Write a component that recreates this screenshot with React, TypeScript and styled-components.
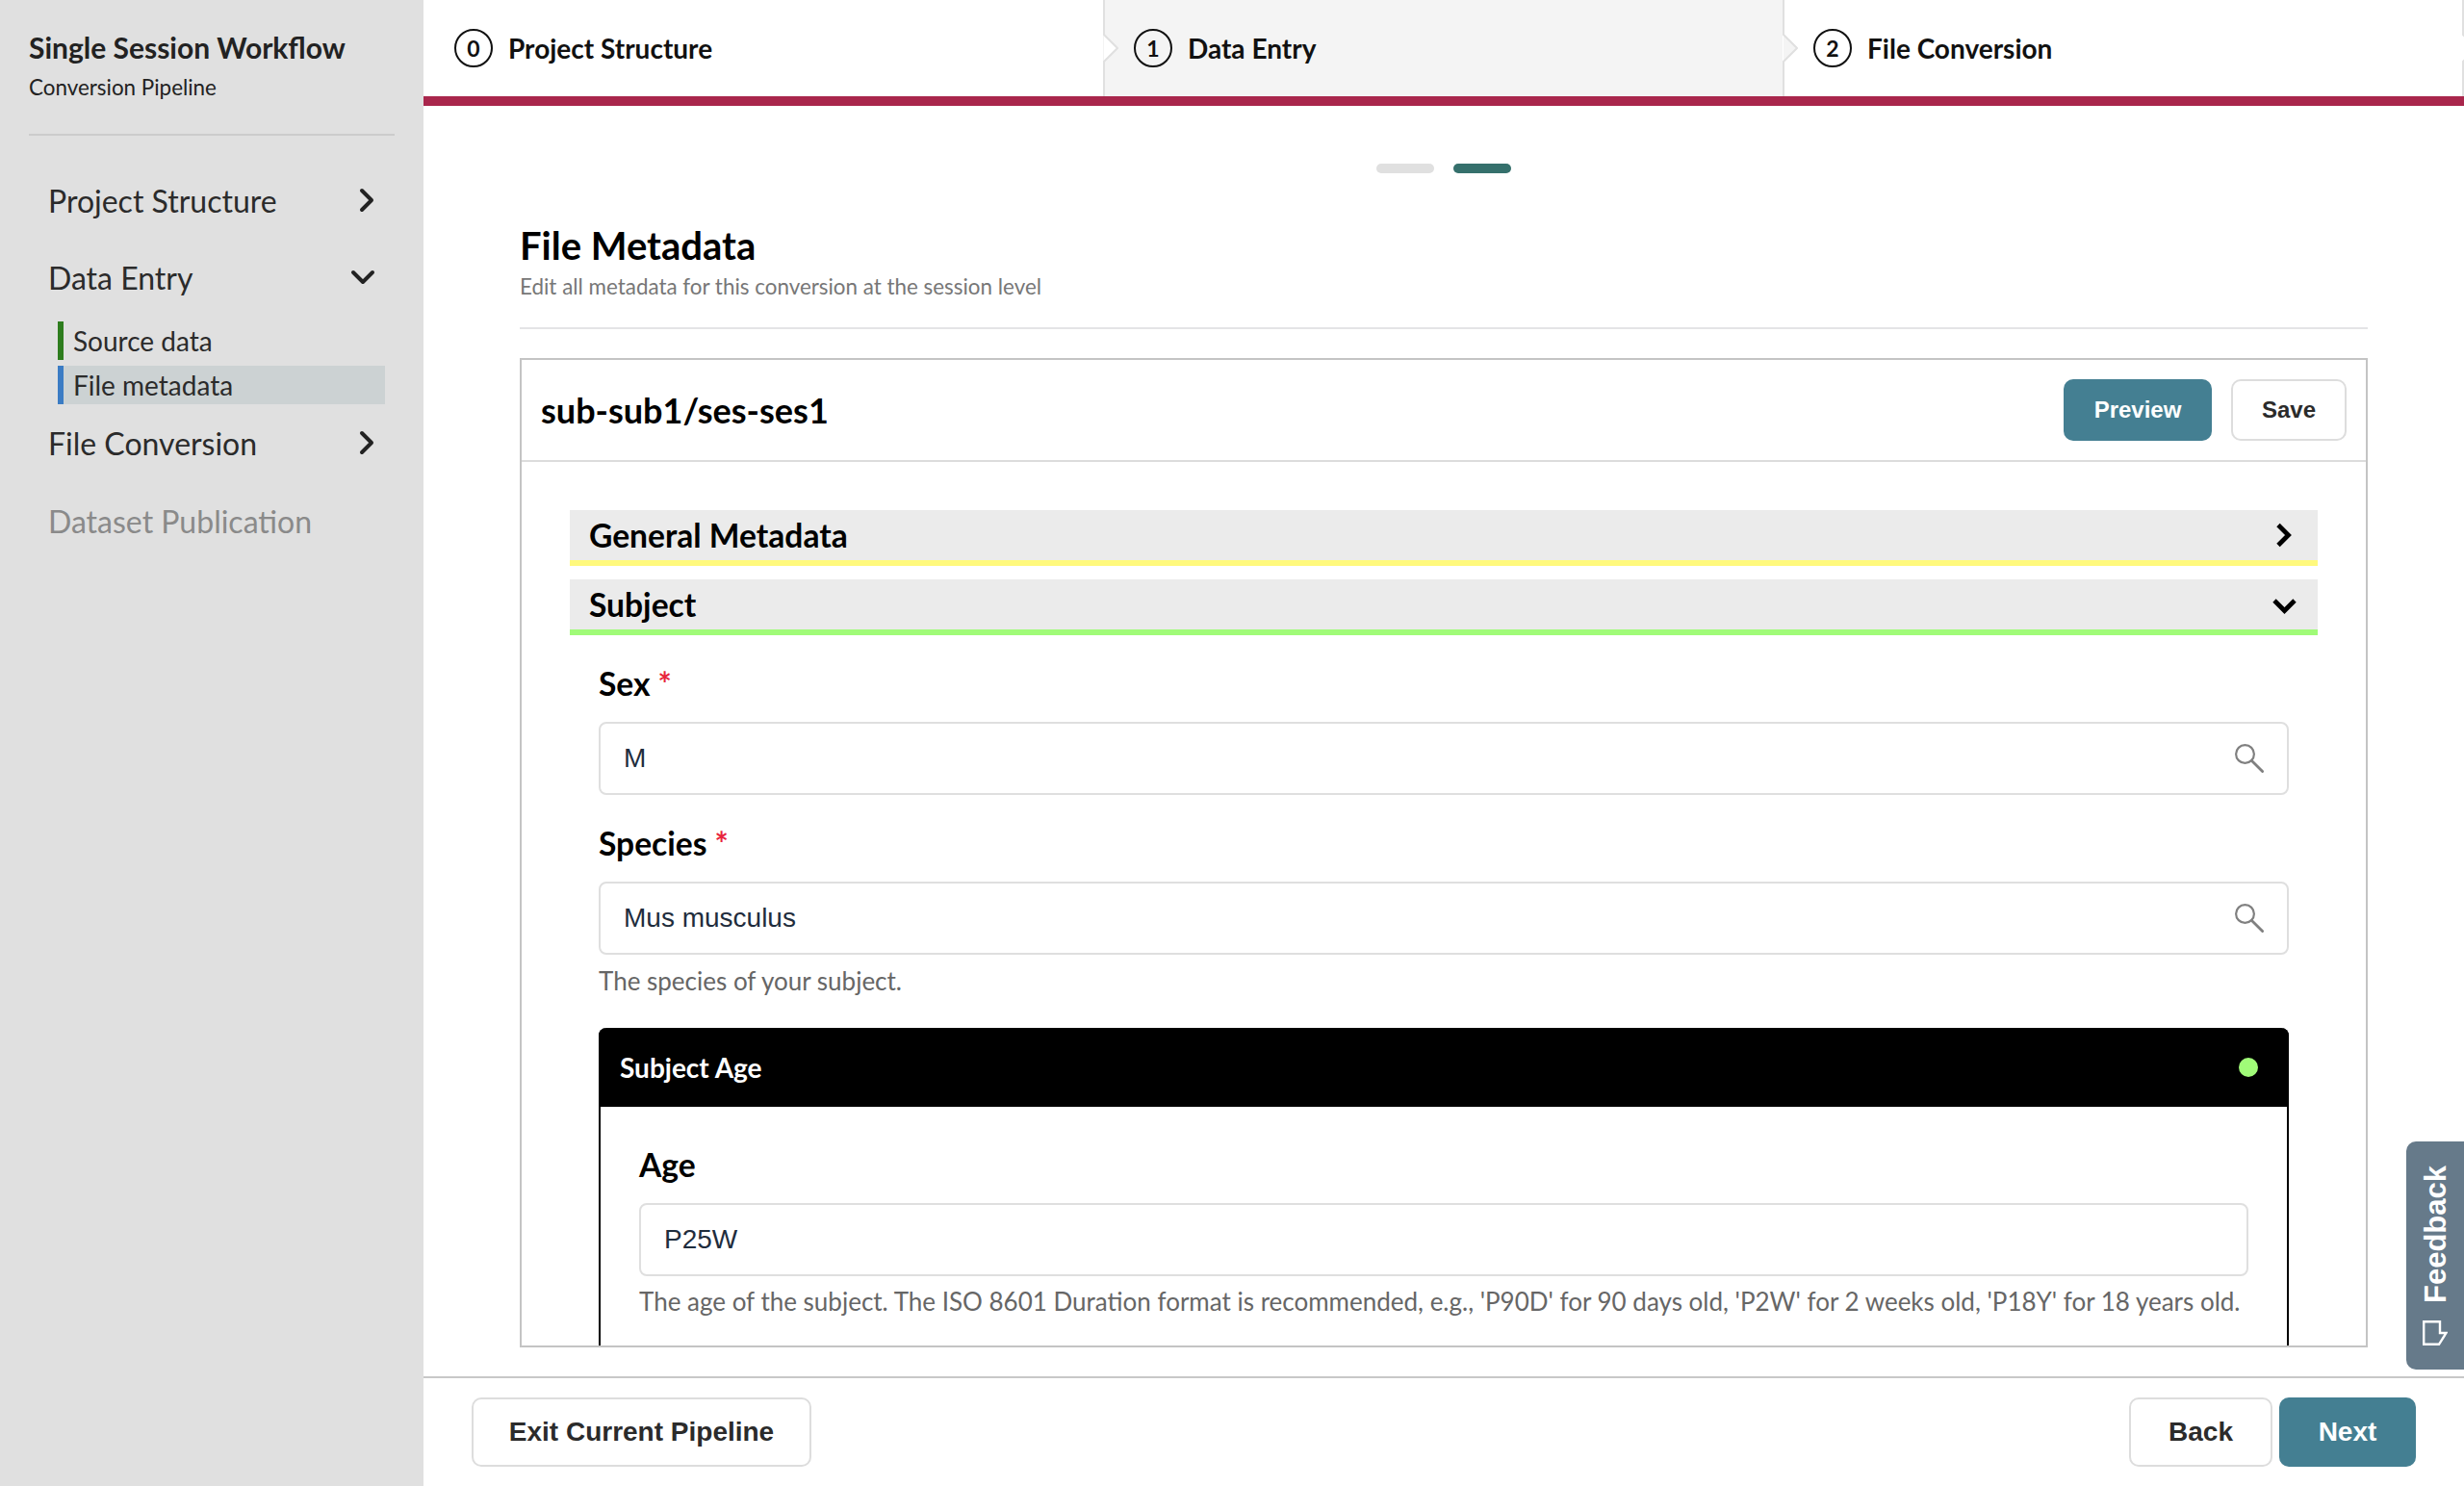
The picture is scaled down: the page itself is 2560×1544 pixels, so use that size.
import React from "react";
import styled, { createGlobalStyle } from "styled-components";

const Global = createGlobalStyle`
  html, body { margin: 0; padding: 0; height: 100%; background: #fff; overflow: hidden; }
  #root { height: 100%; }
  * { box-sizing: border-box; }
`;

const lato = `Lato, "Noto Sans", sans-serif`;
const helv = `"Liberation Sans", Arial, sans-serif`;

const Shell = styled.div`
  display: flex;
  width: 2560px;
  height: 1544px;
  font-family: ${lato};
  position: relative;
  overflow: hidden;
`;

const Sidebar = styled.aside`
  width: 440px;
  flex: none;
  background: #e0e0e0;
  padding: 29px 30px 0;
`;
const SideTitle = styled.div`
  font-size: 30px;
  font-weight: 700;
  line-height: 40px;
  color: #222;
`;
const SideSub = styled.div`
  font-size: 22.4px;
  line-height: 30px;
  margin-top: 7px;
  color: #222;
`;
const SideRule = styled.div`
  height: 2px;
  background: #ccc;
  margin: 33px 0 47px;
`;
const NavRow = styled.div<{ $muted?: boolean; $top?: number; $gapAfter: number }>`
  display: flex;
  align-items: center;
  justify-content: space-between;
  height: 40px;
  padding: 0 20px 0 20px;
  margin-top: ${(p) => p.$top ?? 0}px;
  margin-bottom: ${(p) => p.$gapAfter}px;
  font-size: 32px;
  color: ${(p) => (p.$muted ? "#8a8a8a" : "#2b2b2b")};
`;
const SubItem = styled.div<{ $bar: string; $active?: boolean }>`
  display: flex;
  align-items: center;
  height: 40px;
  width: 340px;
  margin: 0 0 6px 30px;
  padding-left: 10px;
  border-left: 6px solid ${(p) => p.$bar};
  background: ${(p) => (p.$active ? "#ccd2d3" : "transparent")};
  font-size: 28px;
  color: #2b2b2b;
`;

const Main = styled.main`
  flex: 1;
  min-width: 0;
  display: flex;
  flex-direction: column;
`;
const Stepper = styled.nav`
  display: flex;
  height: 110px;
  flex: none;
  border-bottom: 10px solid #a9264c;
`;
const Step = styled.div<{ $bg?: boolean; $w: number }>`
  position: relative;
  width: ${(p) => p.$w}px;
  display: flex;
  align-items: center;
  gap: 16px;
  padding: 0 0 0 32px;
  background: ${(p) => (p.$bg ? "#f4f4f4" : "#fff")};
  font-size: 28px;
  font-weight: 700;
  color: #111;
`;
const StepNum = styled.span`
  width: 40px;
  height: 40px;
  border-radius: 50%;
  border: 2px solid #111;
  display: flex;
  align-items: center;
  justify-content: center;
  font-size: 23px;
  font-weight: 700;
  font-variant-numeric: lining-nums;
  font-family: ${lato};
`;
const StepArrow = styled.svg`
  position: absolute;
  right: -16px;
  top: 0;
  width: 16px;
  height: 100px;
  z-index: 1;
`;

const Content = styled.div`
  flex: 1;
  min-height: 0;
  display: flex;
  flex-direction: column;
  padding: 60px 100px 30px 100px;
`;
const Pills = styled.div`
  display: flex;
  justify-content: center;
  gap: 20px;
  margin-bottom: 50px;
`;
const Pill = styled.span<{ $on?: boolean }>`
  width: 60px;
  height: 10px;
  border-radius: 5px;
  background: ${(p) => (p.$on ? "#35706c" : "#e0e0e0")};
`;
const PageTitle = styled.h1`
  margin: 0;
  font-size: 40px;
  font-weight: 700;
  line-height: 50px;
  color: #000;
`;
const PageSub = styled.div`
  font-size: 22.4px;
  line-height: 28px;
  margin-top: 4px;
  color: #777;
`;
const Rule = styled.div`
  height: 2px;
  background: #e4e4e6;
  margin: 28px 0 30px;
`;
const Card = styled.section`
  flex: 1;
  min-height: 0;
  border: 2px solid #c4c4c4;
  display: flex;
  flex-direction: column;
  overflow: hidden;
`;
const CardHead = styled.header`
  height: 106px;
  flex: none;
  border-bottom: 2px solid #dcdcdc;
  display: flex;
  align-items: center;
  justify-content: space-between;
  padding: 0 20px;
`;
const CardTitle = styled.div`
  font-size: 36px;
  font-weight: 700;
  color: #000;
`;
const BtnRow = styled.div<{ $gap: number }>`
  display: flex;
  gap: ${(p) => p.$gap}px;
`;
const Btn = styled.button<{ $primary?: boolean; $w: number; $h: number; $fs: number }>`
  width: ${(p) => p.$w}px;
  height: ${(p) => p.$h}px;
  border-radius: 10px;
  border: ${(p) => (p.$primary ? "none" : "2px solid #ddd")};
  background: ${(p) => (p.$primary ? "#447f92" : "#fff")};
  color: ${(p) => (p.$primary ? "#fff" : "#2b2b2b")};
  font-family: ${helv};
  font-weight: 700;
  font-size: ${(p) => p.$fs}px;
  padding: 0;
`;
const CardBody = styled.div`
  padding: 50px 50px 0;
  display: flex;
  flex-direction: column;
`;
const AccHead = styled.div<{ $color: string; $gapAfter: number }>`
  height: 58px;
  flex: none;
  background: #ebebeb;
  border-bottom: 6px solid ${(p) => p.$color};
  margin-bottom: ${(p) => p.$gapAfter}px;
  display: flex;
  align-items: center;
  justify-content: space-between;
  padding: 0 22px 0 20px;
  font-size: 33.6px;
  font-weight: 700;
  color: #000;
`;
const AccBody = styled.div`
  padding: 30px 30px 0;
`;
const Label = styled.div`
  font-size: 33.6px;
  font-weight: 700;
  line-height: 40px;
  color: #000;
`;
const Req = styled.span`
  color: #e8243c;
  font-weight: 700;
  margin-left: 8px;
`;
const InputBox = styled.div<{ $top: number }>`
  height: 76px;
  margin-top: ${(p) => p.$top}px;
  border: 2px solid #dfdfdf;
  border-radius: 8px;
  padding: 0 24px;
  display: flex;
  align-items: center;
  justify-content: space-between;
  font-family: ${helv};
  font-size: 28px;
  color: #1f2d3d;
`;
const Hint = styled.div<{ $top: number }>`
  margin-top: ${(p) => p.$top}px;
  font-size: 26px;
  line-height: 34px;
  color: #666;
  white-space: nowrap;
`;
const Field = styled.div<{ $top: number }>`
  margin-top: ${(p) => p.$top}px;
`;
const AgeCard = styled.div`
  margin-top: 32px;
  border-radius: 8px 8px 0 0;
  border: solid #000;
  border-width: 0 2px;
`;
const AgeHead = styled.div`
  height: 82px;
  background: #000;
  margin: 0 -2px;
  border-radius: 8px 8px 0 0;
  display: flex;
  align-items: center;
  justify-content: space-between;
  padding: 0 32px 0 22px;
  color: #fff;
  font-size: 28px;
  font-weight: 700;
`;
const Dot = styled.span`
  width: 20px;
  height: 20px;
  border-radius: 50%;
  background: #a0fb78;
`;
const AgeBody = styled.div`
  padding: 40px 40px 40px;
`;

const Footer = styled.footer`
  height: 114px;
  flex: none;
  border-top: 2px solid #c8c8c8;
  display: flex;
  align-items: center;
  justify-content: space-between;
  padding: 0 50px;
`;
const Feedback = styled.div`
  position: absolute;
  right: 0;
  top: 1186px;
  width: 60px;
  height: 237px;
  background: #667a8a;
  border-radius: 10px 0 0 10px;
  display: flex;
  flex-direction: column-reverse;
  align-items: center;
  justify-content: flex-start;
  gap: 18px;
  padding: 25px 0;
  color: #fff;
  font-family: ${helv};
  font-weight: 700;
  font-size: 31px;
`;
const FeedbackText = styled.span`
  writing-mode: vertical-rl;
  transform: rotate(180deg);
  line-height: 1;
`;

const SideChevRight = () => (
  <svg width="18" height="26" viewBox="0 0 18 26" fill="none">
    <path d="M4 3 L14 13 L4 23" stroke="#222" strokeWidth="4" strokeLinecap="round" strokeLinejoin="round" />
  </svg>
);
const SideChevDown = () => (
  <svg width="26" height="18" viewBox="0 0 26 18" fill="none">
    <path d="M3 4 L13 14 L23 4" stroke="#222" strokeWidth="4" strokeLinecap="round" strokeLinejoin="round" />
  </svg>
);
const AccChev = ({ dir }: { dir: "right" | "down" }) => (
  <svg width="26" height="26" viewBox="0 0 26 26" fill="none">
    <path
      d={dir === "right" ? "M7 2.5 L17.5 13 L7 23.5" : "M3 9 L13.5 19.5 L24 9"}
      stroke="#000"
      strokeWidth="4.8"
      strokeLinejoin="miter"
    />
  </svg>
);
const Search = () => (
  <svg width="30" height="30" viewBox="0 0 30 30" fill="none" stroke="#808080">
    <circle cx="10.5" cy="10.5" r="9.4" strokeWidth="2.2" />
    <path d="M17.5 17.5 L28.6 28.6" strokeWidth="2.8" strokeLinecap="round" />
  </svg>
);
const Arrow = ({ fill }: { fill: string }) => (
  <StepArrow viewBox="0 0 16 100">
    <path d="M1 36 L15 50 L1 64 Z" fill={fill} stroke="none" />
    <path d="M1 0 V36 L15 50 L1 64 V100" fill="none" stroke="#e0e0e0" strokeWidth="2" />
  </StepArrow>
);
const FeedbackIcon = () => (
  <svg width="26" height="26" viewBox="0 0 26 26" fill="none" stroke="#fff" strokeWidth="2.4">
    <path d="M1.2 1.2 H18 V13 H24.5 L17 24.8 H1.2 Z" />
  </svg>
);

export default function App() {
  return (
    <Shell>
      <Global />
      <Sidebar>
        <SideTitle>Single Session Workflow</SideTitle>
        <SideSub>Conversion Pipeline</SideSub>
        <SideRule />
        <NavRow $gapAfter={40}>Project Structure<SideChevRight /></NavRow>
        <NavRow $gapAfter={26}>Data Entry<SideChevDown /></NavRow>
        <SubItem $bar="#2e7d1e">Source data</SubItem>
        <SubItem $bar="#3b7cc4" $active>File metadata</SubItem>
        <NavRow $top={20} $gapAfter={41}>File Conversion<SideChevRight /></NavRow>
        <NavRow $gapAfter={0} $muted>Dataset Publication</NavRow>
      </Sidebar>
      <Main>
        <Stepper>
          <Step $w={706}><StepNum>0</StepNum>Project Structure<Arrow fill="#fff" /></Step>
          <Step $w={706} $bg><StepNum>1</StepNum>Data Entry<Arrow fill="#f4f4f4" /></Step>
          <Step $w={706}><StepNum>2</StepNum>File Conversion<Arrow fill="#fff" /></Step>
        </Stepper>
        <Content>
          <Pills><Pill /><Pill $on /></Pills>
          <PageTitle>File Metadata</PageTitle>
          <PageSub>Edit all metadata for this conversion at the session level</PageSub>
          <Rule />
          <Card>
            <CardHead>
              <CardTitle>sub-sub1/ses-ses1</CardTitle>
              <BtnRow $gap={20}>
                <Btn $primary $w={154} $h={64} $fs={24}>Preview</Btn>
                <Btn $w={120} $h={64} $fs={24}>Save</Btn>
              </BtnRow>
            </CardHead>
            <CardBody>
              <AccHead $color="#fff97d" $gapAfter={14}>General Metadata<AccChev dir="right" /></AccHead>
              <AccHead $color="#a0fb78" $gapAfter={0}>Subject<AccChev dir="down" /></AccHead>
              <AccBody>
                <Label>Sex<Req>*</Req></Label>
                <InputBox $top={20}>M<Search /></InputBox>
                <Field $top={30}>
                  <Label>Species<Req>*</Req></Label>
                  <InputBox $top={20}>Mus musculus<Search /></InputBox>
                </Field>
                <Hint $top={10}>The species of your subject.</Hint>
                <AgeCard>
                  <AgeHead>Subject Age<Dot /></AgeHead>
                  <AgeBody>
                    <Label>Age</Label>
                    <InputBox $top={20}>P25W</InputBox>
                    <Hint $top={9}>The age of the subject. The ISO 8601 Duration format is recommended, e.g., 'P90D' for 90 days old, 'P2W' for 2 weeks old, 'P18Y' for 18 years old.</Hint>
                  </AgeBody>
                </AgeCard>
              </AccBody>
            </CardBody>
          </Card>
        </Content>
        <Footer>
          <Btn $w={353} $h={72} $fs={28}>Exit Current Pipeline</Btn>
          <BtnRow $gap={7}>
            <Btn $w={149} $h={72} $fs={28}>Back</Btn>
            <Btn $primary $w={142} $h={72} $fs={28}>Next</Btn>
          </BtnRow>
        </Footer>
      </Main>
      <Feedback>
        <FeedbackIcon />
        <FeedbackText>Feedback</FeedbackText>
      </Feedback>
    </Shell>
  );
}
